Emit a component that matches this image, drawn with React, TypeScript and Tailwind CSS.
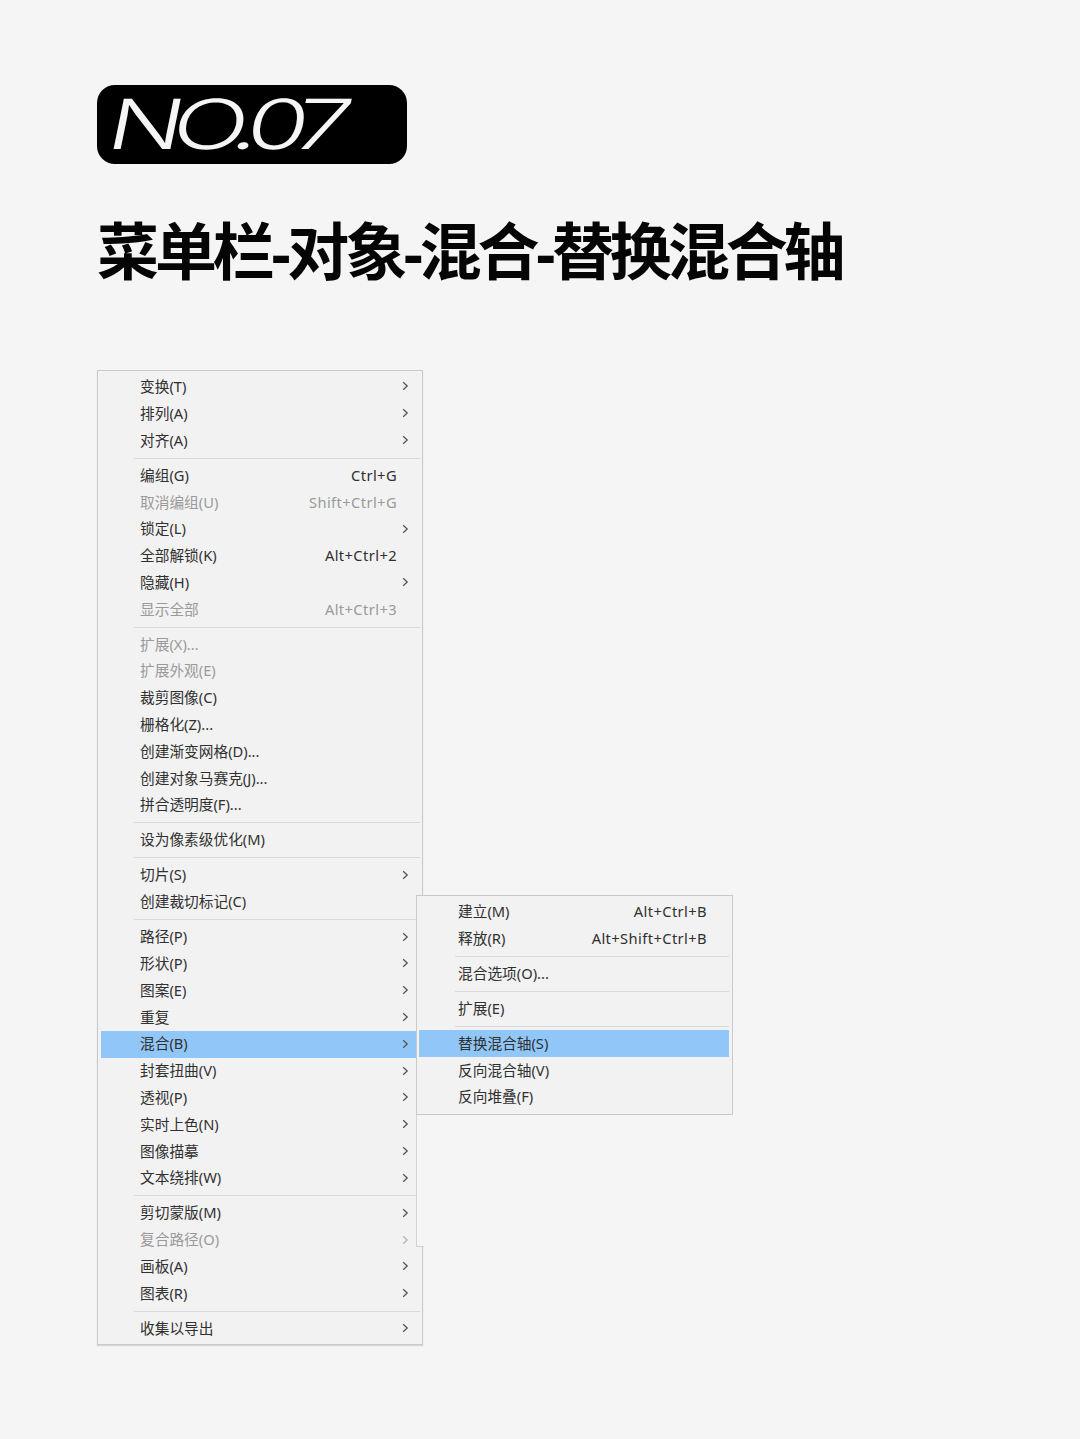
const FONT = "font-['Noto_Sans','Noto_Sans_CJK_SC',sans-serif]";

type Row = { t: string; s?: string; arrow?: boolean; dim?: boolean; hi?: boolean };

const groups: Row[][] = [
  [
    { t: "变换(T)", arrow: true },
    { t: "排列(A)", arrow: true },
    { t: "对齐(A)", arrow: true },
  ],
  [
    { t: "编组(G)", s: "Ctrl+G" },
    { t: "取消编组(U)", s: "Shift+Ctrl+G", dim: true },
    { t: "锁定(L)", arrow: true },
    { t: "全部解锁(K)", s: "Alt+Ctrl+2" },
    { t: "隐藏(H)", arrow: true },
    { t: "显示全部", s: "Alt+Ctrl+3", dim: true },
  ],
  [
    { t: "扩展(X)...", dim: true },
    { t: "扩展外观(E)", dim: true },
    { t: "裁剪图像(C)" },
    { t: "栅格化(Z)..." },
    { t: "创建渐变网格(D)..." },
    { t: "创建对象马赛克(J)..." },
    { t: "拼合透明度(F)..." },
  ],
  [{ t: "设为像素级优化(M)" }],
  [{ t: "切片(S)", arrow: true }, { t: "创建裁切标记(C)" }],
  [
    { t: "路径(P)", arrow: true },
    { t: "形状(P)", arrow: true },
    { t: "图案(E)", arrow: true },
    { t: "重复", arrow: true },
    { t: "混合(B)", arrow: true, hi: true },
    { t: "封套扭曲(V)", arrow: true },
    { t: "透视(P)", arrow: true },
    { t: "实时上色(N)", arrow: true },
    { t: "图像描摹", arrow: true },
    { t: "文本绕排(W)", arrow: true },
  ],
  [
    { t: "剪切蒙版(M)", arrow: true },
    { t: "复合路径(O)", arrow: true, dim: true },
    { t: "画板(A)", arrow: true },
    { t: "图表(R)", arrow: true },
  ],
  [{ t: "收集以导出", arrow: true }],
];

const subGroups: Row[][] = [
  [
    { t: "建立(M)", s: "Alt+Ctrl+B" },
    { t: "释放(R)", s: "Alt+Shift+Ctrl+B" },
  ],
  [{ t: "混合选项(O)..." }],
  [{ t: "扩展(E)" }],
  [
    { t: "替换混合轴(S)", hi: true },
    { t: "反向混合轴(V)" },
    { t: "反向堆叠(F)" },
  ],
];

function Chevron({ dim }: { dim?: boolean }) {
  return (
    <svg width="7" height="10" viewBox="0 0 7 10" className={dim ? "text-[#b5b5b5]" : "text-[#555555]"}>
      <path d="M1.2 1.2 L5.2 5 L1.2 8.8" fill="none" stroke="currentColor" strokeWidth="1.3" />
    </svg>
  );
}

function MenuRow({ r, pad, right }: { r: Row; pad: string; right: string }) {
  return (
    <div
      className={`flex h-[26.8px] items-center justify-between pb-[1.2px] text-[14.7px] leading-none ${pad} ${right} ${
        r.hi ? "bg-[#90c6f8]" : ""
      } ${r.dim ? "text-[#9a9a9a]" : "text-[#303030]"}`}
    >
      <span>{r.t}</span>
      {r.s && <span className="tracking-[0.4px]">{r.s}</span>}
      {r.arrow && <Chevron dim={r.dim} />}
    </div>
  );
}

function Sep({ left }: { left: string }) {
  return (
    <div className={`flex h-[8.2px] items-center ${left}`}>
      <div className="h-px w-full bg-[#d9d9d9]" />
    </div>
  );
}

export default function App() {
  return (
    <div className={`relative h-[1439px] w-[1080px] overflow-hidden bg-[#f5f5f5] ${FONT}`}>
      <div className="flex flex-col pl-[97px] pt-[85px]">
        <div className="flex h-[79px] w-[310px] items-center rounded-[18px] bg-black pl-[12px]">
          <span className="origin-left -skew-x-[8deg] scale-x-[1.45] font-['Inter',sans-serif] text-[69px] font-[350] leading-none tracking-[-8px] text-[#f5f5f5]">
            NO.07
          </span>
        </div>

        <h1 className="mt-[52px] h-[76px] font-['Liberation_Sans','Noto_Sans_CJK_SC',sans-serif] text-[62px] font-bold leading-[76px] tracking-[-4.1px] text-[#050505]">
          菜单栏-对象-混合-替换混合轴
        </h1>

        <div className="mt-[78px] w-[326px] border border-[#c9c9c9] bg-[#f2f2f2] pb-[2.4px] pl-[3px] pr-[2px] pt-[2.7px] shadow-[0_1px_1px_rgba(0,0,0,0.12)]">
          {groups.map((g, i) => (
            <div key={i}>
              {i > 0 && <Sep left="pl-[33px]" />}
              {g.map((r) => (
                <MenuRow key={r.t} r={r} pad="pl-[39px]" right={r.arrow ? "pr-[11px]" : "pr-[23px]"} />
              ))}
            </div>
          ))}
        </div>
      </div>

      <div className="absolute left-[416px] top-[895px] w-[317px] border border-[#c9c9c9] bg-[#f2f2f2] pb-[3px] pl-[2px] pr-[3px] pt-[2.7px]">
        {subGroups.map((g, i) => (
          <div key={i}>
            {i > 0 && <Sep left="pl-[36px]" />}
            {g.map((r) => (
              <MenuRow key={r.t} r={r} pad="pl-[39px]" right="pr-[22px]" />
            ))}
          </div>
        ))}
      </div>
      <div className="absolute left-[416px] top-[1115px] h-[132px] w-[8px] border-b border-l border-[#d4d4d4] bg-[#f5f5f5]" />
    </div>
  );
}
